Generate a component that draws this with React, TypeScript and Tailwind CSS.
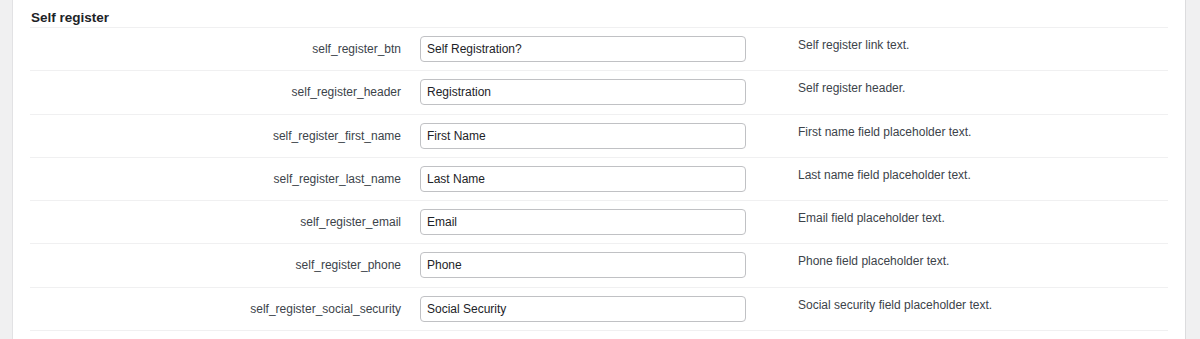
const rows = [
  { key: "self_register_btn", value: "Self Registration?", desc: "Self register link text." },
  { key: "self_register_header", value: "Registration", desc: "Self register header." },
  { key: "self_register_first_name", value: "First Name", desc: "First name field placeholder text." },
  { key: "self_register_last_name", value: "Last Name", desc: "Last name field placeholder text." },
  { key: "self_register_email", value: "Email", desc: "Email field placeholder text." },
  { key: "self_register_phone", value: "Phone", desc: "Phone field placeholder text." },
  { key: "self_register_social_security", value: "Social Security", desc: "Social security field placeholder text." },
];

export default function App() {
  return (
    <div className="flex h-[339px] w-[1200px] overflow-hidden bg-[#f0f0f1] font-['Liberation_Sans',Arial,sans-serif] text-[#1d2327]">
      <div className="w-[13px] shrink-0 border-r border-[#e2e2e4]" />

      {/* Panel */}
      <div className="flex w-[1172px] flex-col bg-white px-[17px]">
        <h2 className="pt-[8px] pl-[1px] text-[13.5px] font-bold leading-[19px] text-[#1d2327]">Self register</h2>

        {rows.map((r) => (
          <div key={r.key} className="flex h-[43.3px] shrink-0 border-t border-[#f0f0f1] pt-[8px]">
            <div className="flex h-[26px] w-[390px] shrink-0 items-center justify-end pr-[19px] text-[12px] text-[#3c434a]">
              {r.key}
            </div>
            <input
              readOnly
              value={r.value}
              className="h-[26px] w-[326px] shrink-0 rounded-[4px] border border-[#c0c1c4] bg-white px-[6px] text-[12px] text-[#1d2327] outline-none"
            />
            <p className="pl-[52px] text-[12px] leading-[18px] text-[#3c434a]">{r.desc}</p>
          </div>
        ))}
        <div className="border-t border-[#f0f0f1]" />
      </div>

      <div className="flex-1 border-l border-[#dcdcde] bg-[#f0f0f1]" />
    </div>
  );
}
